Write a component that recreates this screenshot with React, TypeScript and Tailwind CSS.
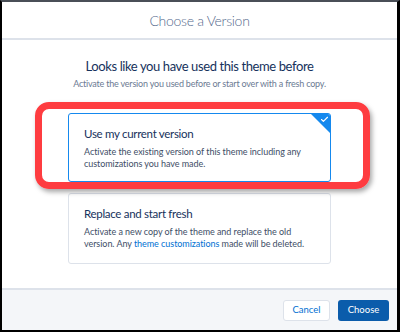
import { Check } from "lucide-react";

export default function App() {
  return (
    <div
      className="w-[400px] h-[332px] bg-white flex flex-col border-l-2 border-r-[3px] border-b-2 border-t-2 border-l-black border-r-black border-b-black border-t-[#4a4f57] text-[#16325c]"
      style={{ fontFamily: "Lato, 'Open Sans', sans-serif" }}
    >
      {/* header */}
      <div className="h-[38px] shrink-0 flex items-center justify-center border-b-2 border-[#dde2ea]">
        <h1 className="text-[14px] font-light text-[#54698d] tracking-[-0.3px]">Choose a Version</h1>
      </div>

      {/* body */}
      <div className="flex-1 relative flex flex-col items-center pt-[17px]">
        <h2 className="text-[13px] text-[#16325c] leading-[18px] tracking-[-0.4px]">
          Looks like you have used this theme before
        </h2>
        <p className="mt-[2px] text-[9px] text-[#6b7a93] leading-[14px] tracking-[-0.2px]">
          Activate the version you used before or start over with a fresh copy.
        </p>

        <div className="mt-[22px] w-[263px] flex flex-col gap-[11px]">
          <div className="relative h-[69px] rounded-[3px] border border-[#1589ee] bg-white px-[15px] pt-[12px] overflow-hidden">
            <div className="text-[11.5px] leading-[16px] text-[#16325c] tracking-[-0.3px]">Use my current version</div>
            <p className="mt-[4px] text-[9px] leading-[11.5px] text-[#3e4e66] tracking-[-0.05px]">
              Activate the existing version of this theme including any customizations you have made.
            </p>
            <div className="absolute top-0 right-0 w-0 h-0 border-t-[19px] border-l-[19px] border-t-[#1589ee] border-l-transparent" />
            <Check className="absolute top-[1px] right-[1px] w-[9px] h-[9px] text-white" strokeWidth={3} />
          </div>

          <div className="h-[71px] rounded-[3px] border border-[#dde2ea] bg-white px-[15px] pt-[12px]">
            <div className="text-[11.5px] leading-[16px] text-[#16325c] tracking-[-0.3px]">Replace and start fresh</div>
            <p className="mt-[4px] text-[9px] leading-[11.5px] text-[#3e4e66] tracking-[-0.05px]">
              Activate a new copy of the theme and replace the old version. Any{" "}
              <span className="text-[#0070d2]">theme customizations</span> made will be deleted.
            </p>
          </div>
        </div>

        {/* highlight annotation */}
        <div className="absolute left-[33px] top-[62px] w-[335px] h-[87px] rounded-[14px] border-[7px] border-[#fe3c40] shadow-[2px_3px_5px_rgba(0,0,0,0.35)] pointer-events-none" />
      </div>

      {/* footer */}
      <div className="h-[42px] shrink-0 bg-[#f4f6f9] border-t-2 border-[#dde2ea] flex items-center justify-end gap-[8px] pr-[8px]">
        <button className="w-[47px] h-[21px] rounded-[3px] border border-[#dde2ea] bg-white text-[9.5px] text-[#0070d2]">
          Cancel
        </button>
        <button className="w-[51px] h-[21px] rounded-[3px] bg-[#0b5cab] text-[9.5px] text-white">
          Choose
        </button>
      </div>
    </div>
  );
}
